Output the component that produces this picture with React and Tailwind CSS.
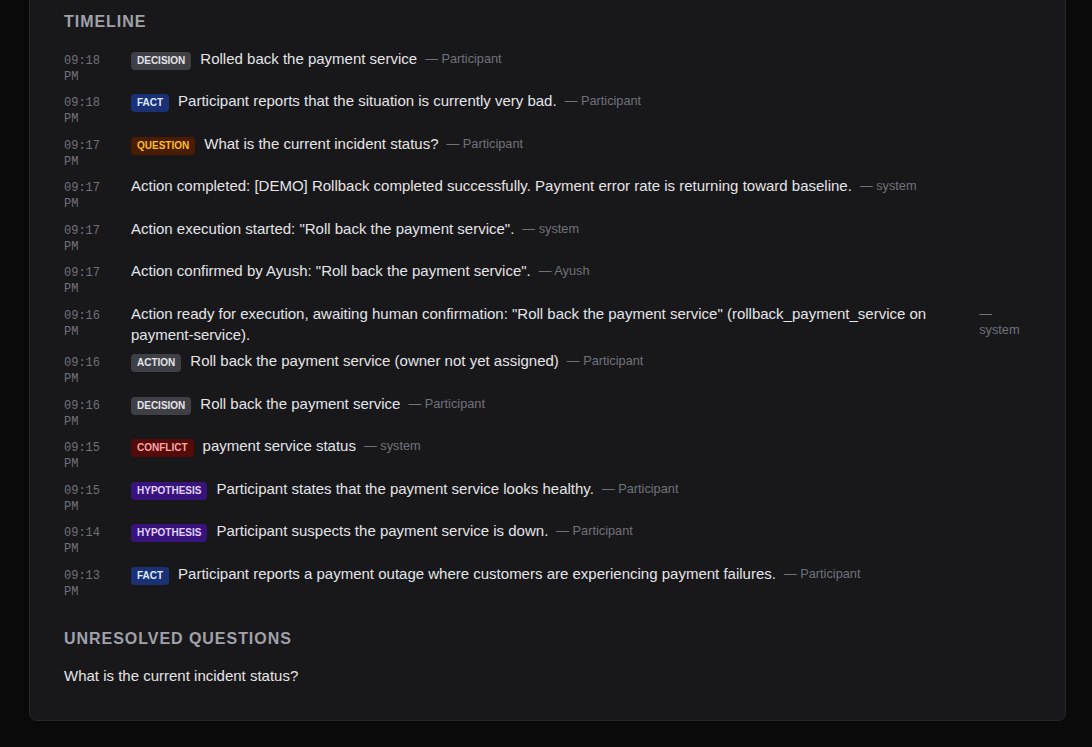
import React from "react";

const BADGE = {
  DECISION: "bg-[#3f3f46] text-[#e4e4e7]",
  ACTION: "bg-[#3f3f46] text-[#e4e4e7]",
  FACT: "bg-[#1b3175] text-[#dbeafe]",
  QUESTION: "bg-[#4a1d03] text-[#fbbf24]",
  CONFLICT: "bg-[#560b0b] text-[#fca5a5]",
  HYPOTHESIS: "bg-[#38137c] text-[#e0d4ff]",
};

const rows = [
  ["09:18 PM", "DECISION", "Rolled back the payment service", "Participant"],
  ["09:18 PM", "FACT", "Participant reports that the situation is currently very bad.", "Participant"],
  ["09:17 PM", "QUESTION", "What is the current incident status?", "Participant"],
  ["09:17 PM", null, "Action completed: [DEMO] Rollback completed successfully. Payment error rate is returning toward baseline.", "system"],
  ["09:17 PM", null, 'Action execution started: "Roll back the payment service".', "system"],
  ["09:17 PM", null, 'Action confirmed by Ayush: "Roll back the payment service".', "Ayush"],
  ["09:16 PM", null, 'Action ready for execution, awaiting human confirmation: "Roll back the payment service" (rollback_payment_service on payment-service).', "system"],
  ["09:16 PM", "ACTION", "Roll back the payment service (owner not yet assigned)", "Participant"],
  ["09:16 PM", "DECISION", "Roll back the payment service", "Participant"],
  ["09:15 PM", "CONFLICT", "payment service status", "system"],
  ["09:15 PM", "HYPOTHESIS", "Participant states that the payment service looks healthy.", "Participant"],
  ["09:14 PM", "HYPOTHESIS", "Participant suspects the payment service is down.", "Participant"],
  ["09:13 PM", "FACT", "Participant reports a payment outage where customers are experiencing payment failures.", "Participant"],
];

export default function App() {
  return (
    <div
      className="min-h-screen w-full bg-[#0a0a0b] pb-[27px]"
      style={{ fontFamily: '"Liberation Sans", Arial, sans-serif' }}
    >
      <div className="ml-[29px] w-[1037px] rounded-b-lg border-x border-b border-[#27272a] bg-[#18181b] px-[34px] pt-[10px] pb-[34px]">
        <h2 className="text-[16px] leading-[24px] font-bold uppercase tracking-[0.06em] text-[#a1a1aa]">
          Timeline
        </h2>
        <div className="mt-[11px] flex flex-col">
          {rows.map(([time, badge, text, who], i) => (
            <div key={i} className="flex items-baseline gap-3 py-[2.75px]">
              <div
                className="w-[55px] shrink-0 text-[12px] leading-[16px] text-[#71717a]"
                style={{ fontFamily: '"Liberation Mono", "Courier New", monospace' }}
              >
                {time}
              </div>
              <div className="flex min-w-0 flex-1 items-baseline gap-2">
                {badge && (
                  <span
                    className={
                      "mr-[1px] shrink-0 rounded px-1.5 py-0.5 text-[10px] leading-[14px] font-bold " +
                      BADGE[badge]
                    }
                  >
                    {badge}
                  </span>
                )}
                <span className="text-[15px] leading-[21px] text-[#e4e4e7]">{text}</span>
                <span className="relative -top-px text-[12.75px] leading-[16px] text-[#71717a]">— {who}</span>
              </div>
            </div>
          ))}
        </div>
        <h2 className="mt-[24px] text-[16px] leading-[24px] font-bold uppercase tracking-[0.06em] text-[#a1a1aa]">
          Unresolved Questions
        </h2>
        <p className="mt-[14px] text-[15px] leading-[21px] text-[#e4e4e7]">
          What is the current incident status?
        </p>
      </div>
    </div>
  );
}
